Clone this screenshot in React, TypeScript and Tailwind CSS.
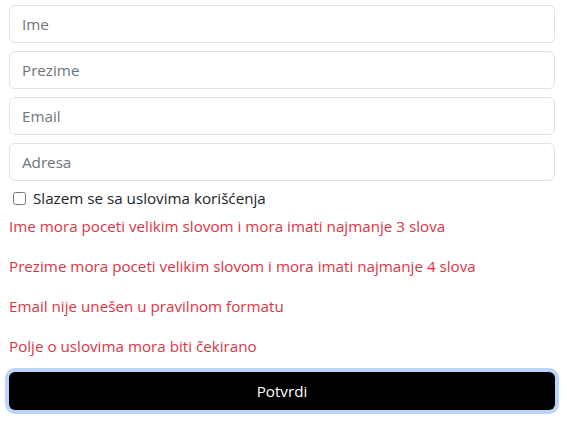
import React from "react";

export default function App() {
  const font = { fontFamily: '"Open Sans", "Noto Sans", sans-serif' };
  const inputCls =
    "block w-full h-[38px] px-3 rounded-[6px] border border-[#dee2e6] bg-white text-[15.2px] text-[#212529] placeholder:text-[#6c757d] outline-none";
  return (
    <div className="min-h-[424px] bg-white font-['Open_Sans',sans-serif]" style={font}>
      <div className="ml-[9px] w-[546px] pt-[5px]">
        <input className={inputCls + " mb-2"} placeholder="Ime" />
        <input className={inputCls + " mb-2"} placeholder="Prezime" />
        <input className={inputCls + " mb-2"} placeholder="Email" />
        <input className={inputCls} placeholder="Adresa" />
        <div className="mt-[5px] flex items-center h-6 text-[15.2px] text-[#212529]">
          <input type="checkbox" className="w-[13px] h-[13px] ml-1 mr-[7px]" />
          <span>Slazem se sa uslovima korišćenja</span>
        </div>
        <div className="mt-1 text-[15.2px] leading-6 text-[#dc3545]">
          Ime mora poceti velikim slovom i mora imati najmanje 3 slova
        </div>
        <div className="mt-4 text-[15.2px] leading-6 text-[#dc3545]">
          Prezime mora poceti velikim slovom i mora imati najmanje 4 slova
        </div>
        <div className="mt-4 text-[15.2px] leading-6 text-[#dc3545]">
          Email nije unešen u pravilnom formatu
        </div>
        <div className="mt-4 text-[15.2px] leading-6 text-[#dc3545]">
          Polje o uslovima mora biti čekirano
        </div>
        <button className="mt-[14px] block w-full h-[38px] rounded-[6px] bg-black text-white text-[15.2px] ring-4 ring-[#bcd4fb]">
          Potvrdi
        </button>
      </div>
    </div>
  );
}
